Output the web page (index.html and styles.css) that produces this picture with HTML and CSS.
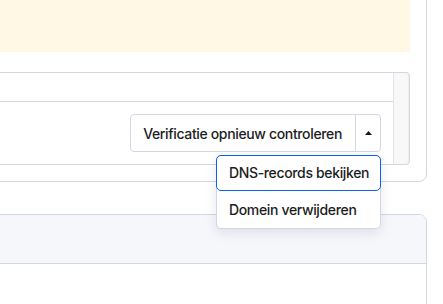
FILE: index.html
```html
<!DOCTYPE html>
<html lang="nl">
<head>
<meta charset="utf-8">
<link rel="stylesheet" href="styles.css">
</head>
<body>
<div class="card">
  <div class="banner"></div>
  <div class="table-wrap">
    <div class="table-main">
      <div class="thead"></div>
      <div class="actions">
        <div class="split">
          <button class="split-main">Verificatie opnieuw controleren</button>
          <button class="split-toggle" aria-label="Meer acties">
            <svg width="7" height="4" viewBox="0 0 7 4"><path d="M0 4 L3.5 0 L7 4 Z" fill="#161616"/></svg>
          </button>
          <div class="menu">
            <div class="menu-item focused">DNS-records bekijken</div>
            <div class="menu-item">Domein verwijderen</div>
          </div>
        </div>
      </div>
    </div>
    <div class="scrollbar"></div>
  </div>
</div>
<div class="card2">
  <div class="card2-head"></div>
  <div class="card2-body"></div>
</div>
</body>
</html>
```

FILE: styles.css
```css
html, body {
  margin: 0;
  padding: 0;
  background: #ffffff;
  overflow: hidden;
}
body {
  font-family: Inter, "Noto Sans", sans-serif;
  font-size: 14px;
  font-weight: 500;
  letter-spacing: -0.35px;
  color: #1b1d22;
  width: 443px;
  height: 304px;
}
.card {
  margin-left: -20px;
  margin-top: -30px;
  width: 447px;
  box-sizing: border-box;
  border: 1px solid #d3d7e1;
  border-radius: 8px;
  padding: 0 16px 16px 16px;
}
.banner {
  height: 81px;
  background: #fff8e5;
}
.table-wrap {
  margin-top: 20px;
  display: flex;
  border: 1px solid #d3d7e1;
  border-right: none;
  border-radius: 0 4px 4px 0;
}
.table-main {
  flex: 1;
}
.thead {
  height: 28px;
  border-bottom: 1px solid #d3d7e1;
}
.actions {
  display: flex;
  justify-content: flex-end;
  padding: 12px 12px 12px 0;
}
.split {
  position: relative;
  display: flex;
  height: 38px;
  border: 1px solid #d3d7e1;
  border-radius: 4px;
  box-sizing: border-box;
}
.btn-reset,
.split-main,
.split-toggle {
  font: inherit;
  letter-spacing: inherit;
  background: transparent;
  border: none;
  color: inherit;
  margin: 0;
}
.split-main {
  padding: 0 13px 0 12px;
}
.split-toggle {
  width: 25px;
  padding: 0;
  border-left: 1px solid #d3d7e1;
  display: flex;
  align-items: center;
  justify-content: center;
}
.split-toggle svg {
  display: block;
  margin-top: -1px;
}
.scrollbar {
  width: 15px;
  background: #f8f8f9;
  border-left: 1px solid #e1e3e9;
  border-right: 1px solid #d3d7e1;
  border-radius: 0 4px 4px 0;
  box-shadow: inset -1px 0 1px rgba(0,0,0,0.04);
}
.menu {
  position: absolute;
  top: calc(100% + 4px);
  right: -1px;
  width: 165px;
  background: #ffffff;
  border: 1px solid #d3d7e1;
  border-radius: 5px;
  box-shadow: 0 4px 12px rgba(20, 30, 60, 0.10);
  box-sizing: border-box;
  z-index: 5;
}
.menu-item {
  height: 37px;
  line-height: 37px;
  padding: 0 12px;
  box-sizing: border-box;
  white-space: nowrap;
}
.menu-item.focused {
  margin: -1px -1px 0 -1px;
  height: 36px;
  line-height: 34px;
  border: 1px solid #0f5ef7;
  border-radius: 5px;
  padding: 0 12px;
}
.card2 {
  margin-top: 32px;
  margin-left: -20px;
  width: 447px;
  box-sizing: border-box;
  border: 1px solid #d3d7e1;
  border-radius: 8px 8px 0 0;
  height: 110px;
  overflow: hidden;
}
.card2-head {
  height: 48px;
  background: #f6f7fb;
  border-bottom: 1px solid #d3d7e1;
}
.card2-body {
  background: #ffffff;
}
```
